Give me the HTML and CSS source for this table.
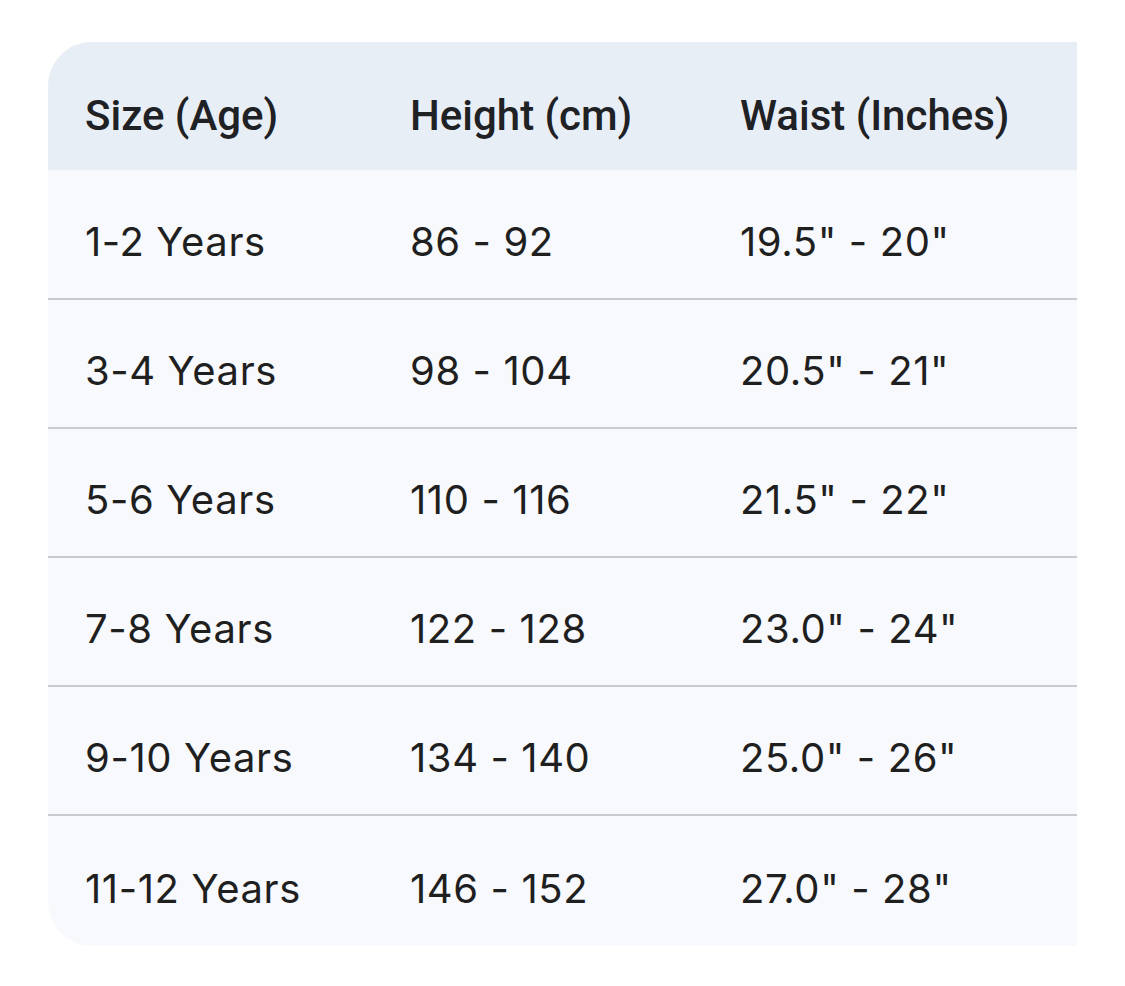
FILE: index.html
```html
<!DOCTYPE html>
<html>
<head>
<meta charset="utf-8">
<link rel="stylesheet" href="styles.css">
</head>
<body>
<div class="wrap">
  <table class="size-table">
    <colgroup>
      <col class="c1"><col class="c2"><col class="c3">
    </colgroup>
    <thead>
      <tr><th>Size (Age)</th><th>Height (cm)</th><th>Waist (Inches)</th></tr>
    </thead>
    <tbody>
      <tr><td>1-2 Years</td><td>86 - 92</td><td>19.5" - 20"</td></tr>
      <tr><td>3-4 Years</td><td>98 - 104</td><td>20.5" - 21"</td></tr>
      <tr><td>5-6 Years</td><td>110 - 116</td><td>21.5" - 22"</td></tr>
      <tr><td>7-8 Years</td><td>122 - 128</td><td>23.0" - 24"</td></tr>
      <tr><td>9-10 Years</td><td>134 - 140</td><td>25.0" - 26"</td></tr>
      <tr><td>11-12 Years</td><td>146 - 152</td><td>27.0" - 28"</td></tr>
    </tbody>
  </table>
</div>
</body>
</html>
```
FILE: styles.css
```css
html, body {
  margin: 0;
  padding: 0;
  background: #ffffff;
}
.wrap {
  padding: 42px 48px 0 48px;
}
.size-table {
  width: 1029px;
  border-collapse: separate;
  border-spacing: 0;
  background: #f7f9fc;
  border-radius: 44px 0 0 44px;
  overflow: hidden;
  color: #1f1f1f;
  table-layout: fixed;
}
.c1 { width: 325px; }
.c2 { width: 330px; }
.c3 { width: auto; }
.size-table th {
  background: #e8eef6;
  height: 129px;
  padding: 18px 0 0 37px;
  text-align: left;
  font-family: Roboto, sans-serif;
  font-weight: 500;
  font-size: 42px;
  letter-spacing: 0;
  color: #202124;
  border-bottom: 1px solid #f4f6fa;
  box-sizing: border-box;
}
.size-table td {
  height: 129px;
  padding: 14px 0 0 37px;
  font-family: Inter, Roboto, sans-serif;
  font-size: 40px;
  font-weight: 400;
  letter-spacing: 0.6px;
  border-bottom: 2px solid #c8cbd0;
  box-sizing: border-box;
}
.size-table tbody tr:last-child td {
  border-bottom: none;
  height: 130px;
}
```
